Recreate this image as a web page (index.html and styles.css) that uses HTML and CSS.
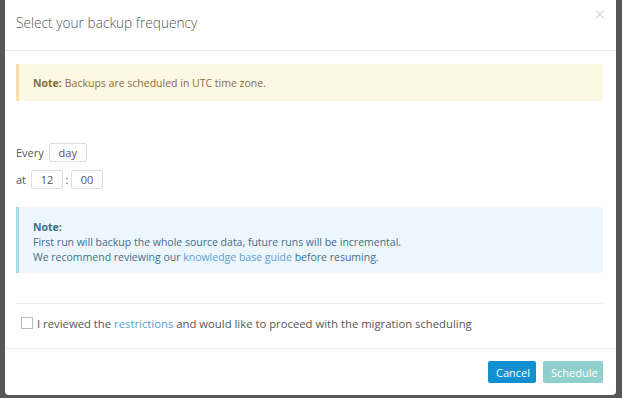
FILE: index.html
```html
<!DOCTYPE html>
<html>
<head>
<meta charset="utf-8">
<link rel="stylesheet" href="styles.css">
</head>
<body>
<div class="modal">
  <div class="modal-header">
    <h4 class="title">Select your backup frequency</h4>
    <span class="close">&times;</span>
  </div>
  <div class="modal-body">
    <div class="alert alert-warning"><b>Note:</b> Backups are scheduled in UTC time zone.</div>
    <div class="freq">
      <div class="row"><span class="lbl">Every</span><span class="field f-day">day</span></div>
      <div class="row"><span class="lbl">at</span><span class="field f-num">12</span><span class="colon">:</span><span class="field f-num">00</span></div>
    </div>
    <div class="alert alert-info">
      <b>Note:</b><br>
      First run will backup the whole source data, future runs will be incremental.<br>
      We recommend reviewing our <a class="link" href="#">knowledge base guide</a> before resuming.
    </div>
    <div class="agree">
      <span class="checkbox"></span>
      <span>I reviewed the <a class="link" href="#">restrictions</a> and would like to proceed with the migration scheduling</span>
    </div>
  </div>
  <div class="modal-footer">
    <button class="btn btn-primary">Cancel</button>
    <button class="btn btn-disabled">Schedule</button>
  </div>
</div>
</body>
</html>
```
FILE: styles.css
```css
html, body {
  margin: 0;
  padding: 0;
  background: #565656;
  height: 398px;
  overflow: hidden;
}
body {
  font-family: "Open Sans", "Liberation Sans", sans-serif;
  color: #555;
}
.modal {
  margin-left: 5px;
  width: 611px;
  height: 395px;
  background: #fff;
  border-radius: 0 0 4px 4px;
  display: flex;
  flex-direction: column;
}
.modal-header {
  position: relative;
  height: 51px;
  border-bottom: 1px solid #e8e8e8;
  padding: 0 11px;
  display: flex;
  align-items: center;
  box-sizing: border-box;
}
.title {
  margin: 0;
  margin-top: -5px;
  font-size: 13.7px;
  font-weight: 300;
  color: #555;
}
.close {
  position: absolute;
  right: 11px;
  top: 2px;
  font-size: 18px;
  color: #c8c8c8;
  font-weight: 300;
}
.modal-body {
  padding: 13px 13px 0 11px;
  flex: 1;
}
.alert {
  border-left: 3px solid;
  font-size: 10.5px;
}
.alert b { font-weight: 700; }
.alert-warning {
  background: #fcf8e3;
  border-color: #f6dfa9;
  color: #8a6d3b;
  height: 37px;
  box-sizing: border-box;
  padding: 0 14px;
  display: flex;
  align-items: center;
}
.alert-warning b { margin-right: 3px; }
.freq {
  margin-top: 42px;
  font-size: 11px;
  color: #555;
}
.row {
  display: flex;
  align-items: center;
  height: 19px;
  margin-bottom: 8px;
}
.lbl { margin-right: 5px; }
.field {
  height: 19px;
  box-sizing: border-box;
  border: 1px solid #ddd;
  border-radius: 2px;
  display: flex;
  align-items: center;
  justify-content: center;
}
.f-day { width: 38px; }
.f-num { width: 32px; }
.colon { width: 8px; text-align: center; }
.alert-info {
  margin-top: 18px;
  background: #edf6fc;
  border-color: #a8dde8;
  color: #3f6d8a;
  height: 66px;
  box-sizing: border-box;
  padding: 13px 14px 0;
  line-height: 15px;
  border-radius: 0 3px 3px 0;
}
.link { color: #5b9fd4; text-decoration: none; }
.agree {
  margin-top: 30px;
  border-top: 1px solid #eee;
  height: 45px;
  box-sizing: border-box;
  padding: 0 0 6px 5px;
  display: flex;
  align-items: center;
  font-size: 11.3px;
  color: #555;
}
.checkbox {
  width: 12px;
  height: 12px;
  border: 1px solid #bbb;
  margin-right: 4px;
  box-sizing: border-box;
}
.modal-footer {
  border-top: 1px solid #eee;
  height: 47px;
  display: flex;
  align-items: flex-start;
  justify-content: flex-end;
  padding: 12px 13px 0 0;
  box-sizing: border-box;
  gap: 7px;
}
.btn {
  height: 22px;
  border: none;
  border-radius: 2px;
  color: #fff;
  font-family: "Open Sans", "Liberation Sans", sans-serif;
  font-size: 11px;
  padding: 0 8px;
}
.btn-primary { background: #1190d2; width: 48px; }
.btn-disabled { background: #8fd0cc; width: 60px; }
```
